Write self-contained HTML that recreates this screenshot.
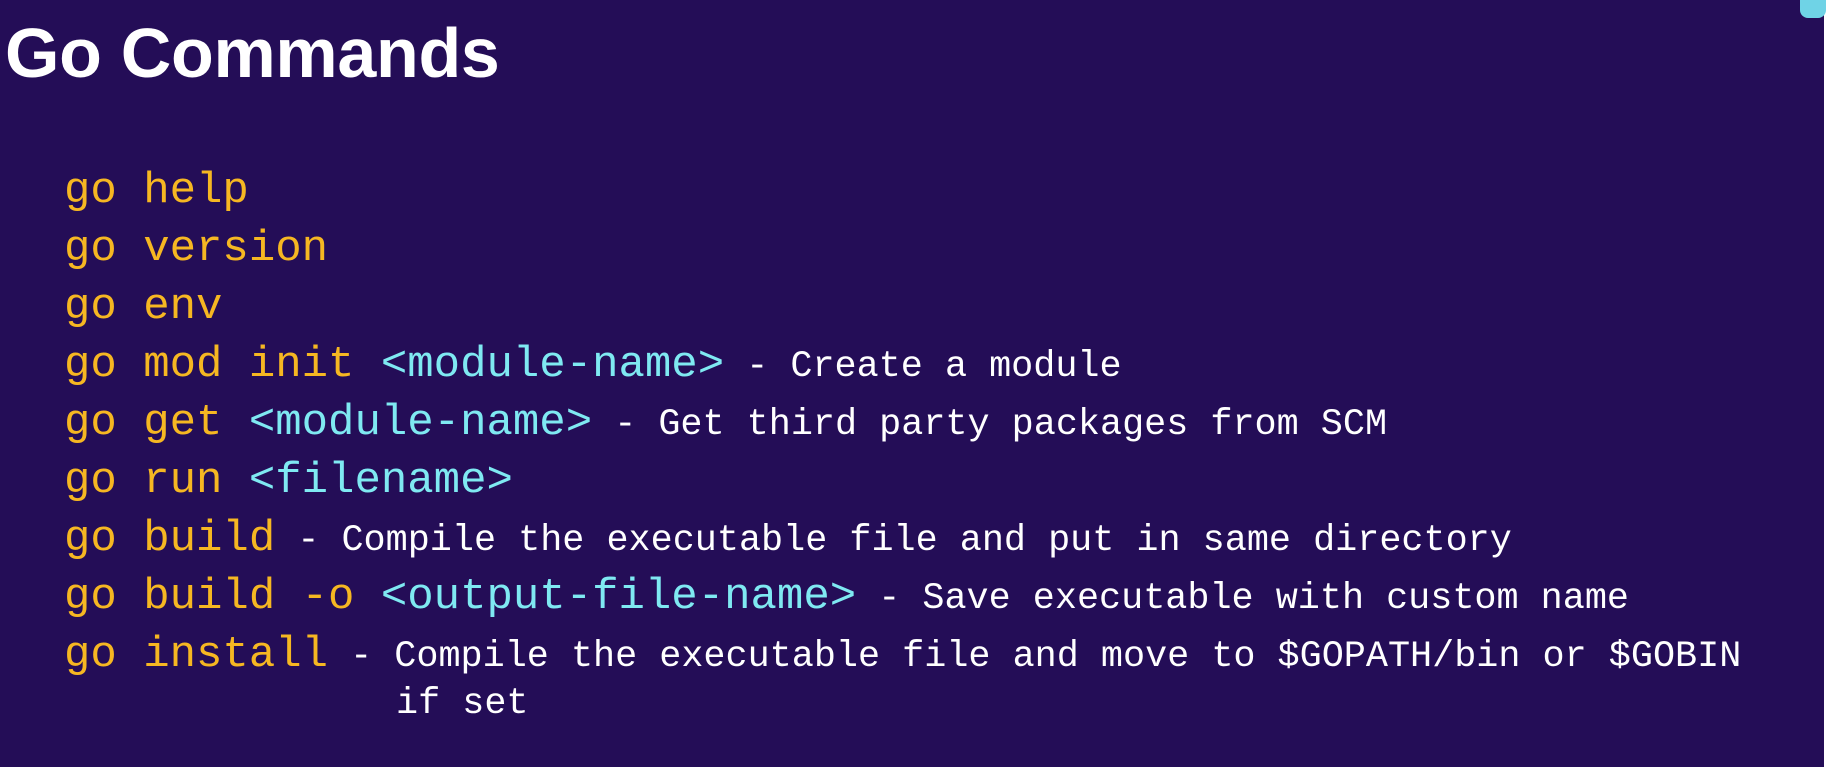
<!DOCTYPE html>
<html><head><meta charset="utf-8"><style>
html,body{margin:0;padding:0}
body{width:1845px;height:767px;background:#fff;position:relative;overflow:hidden}
.bg{position:absolute;left:0;top:0;width:1824px;height:767px;background:#240d57}
.blob{position:absolute;left:1800px;top:-8px;width:26px;height:26px;background:#6fd3e6;border-radius:8px}
h1{position:absolute;left:5px;top:18px;margin:0;font:bold 70px/1 "Liberation Sans",sans-serif;color:#fff;letter-spacing:-0.3px}
.l{position:absolute;left:64px;font-family:"Liberation Mono",monospace;font-size:44px;white-space:pre;line-height:1;color:#f6b722}
.c{color:#7fe9f2}
.d{color:#fff;font-size:36.8px}
</style></head><body>
<div class="bg"></div><div class="blob"></div>
<h1>Go Commands</h1>
<div class="l" style="top:169px">go help</div>
<div class="l" style="top:227px">go version</div>
<div class="l" style="top:285px">go env</div>
<div class="l" style="top:343px">go mod init <span class="c">&lt;module-name&gt;</span><span class="d"> - Create a module</span></div>
<div class="l" style="top:401px">go get <span class="c">&lt;module-name&gt;</span><span class="d"> - Get third party packages from SCM</span></div>
<div class="l" style="top:459px">go run <span class="c">&lt;filename&gt;</span></div>
<div class="l" style="top:517px">go build<span class="d"> - Compile the executable file and put in same directory</span></div>
<div class="l" style="top:575px">go build -o <span class="c">&lt;output-file-name&gt;</span><span class="d"> - Save executable with custom name</span></div>
<div class="l" style="top:633px">go install<span class="d"> - Compile the executable file and move to $GOPATH/bin or $GOBIN</span></div>
<div class="l d" style="top:686px;left:396px">if set</div>
</body></html>
